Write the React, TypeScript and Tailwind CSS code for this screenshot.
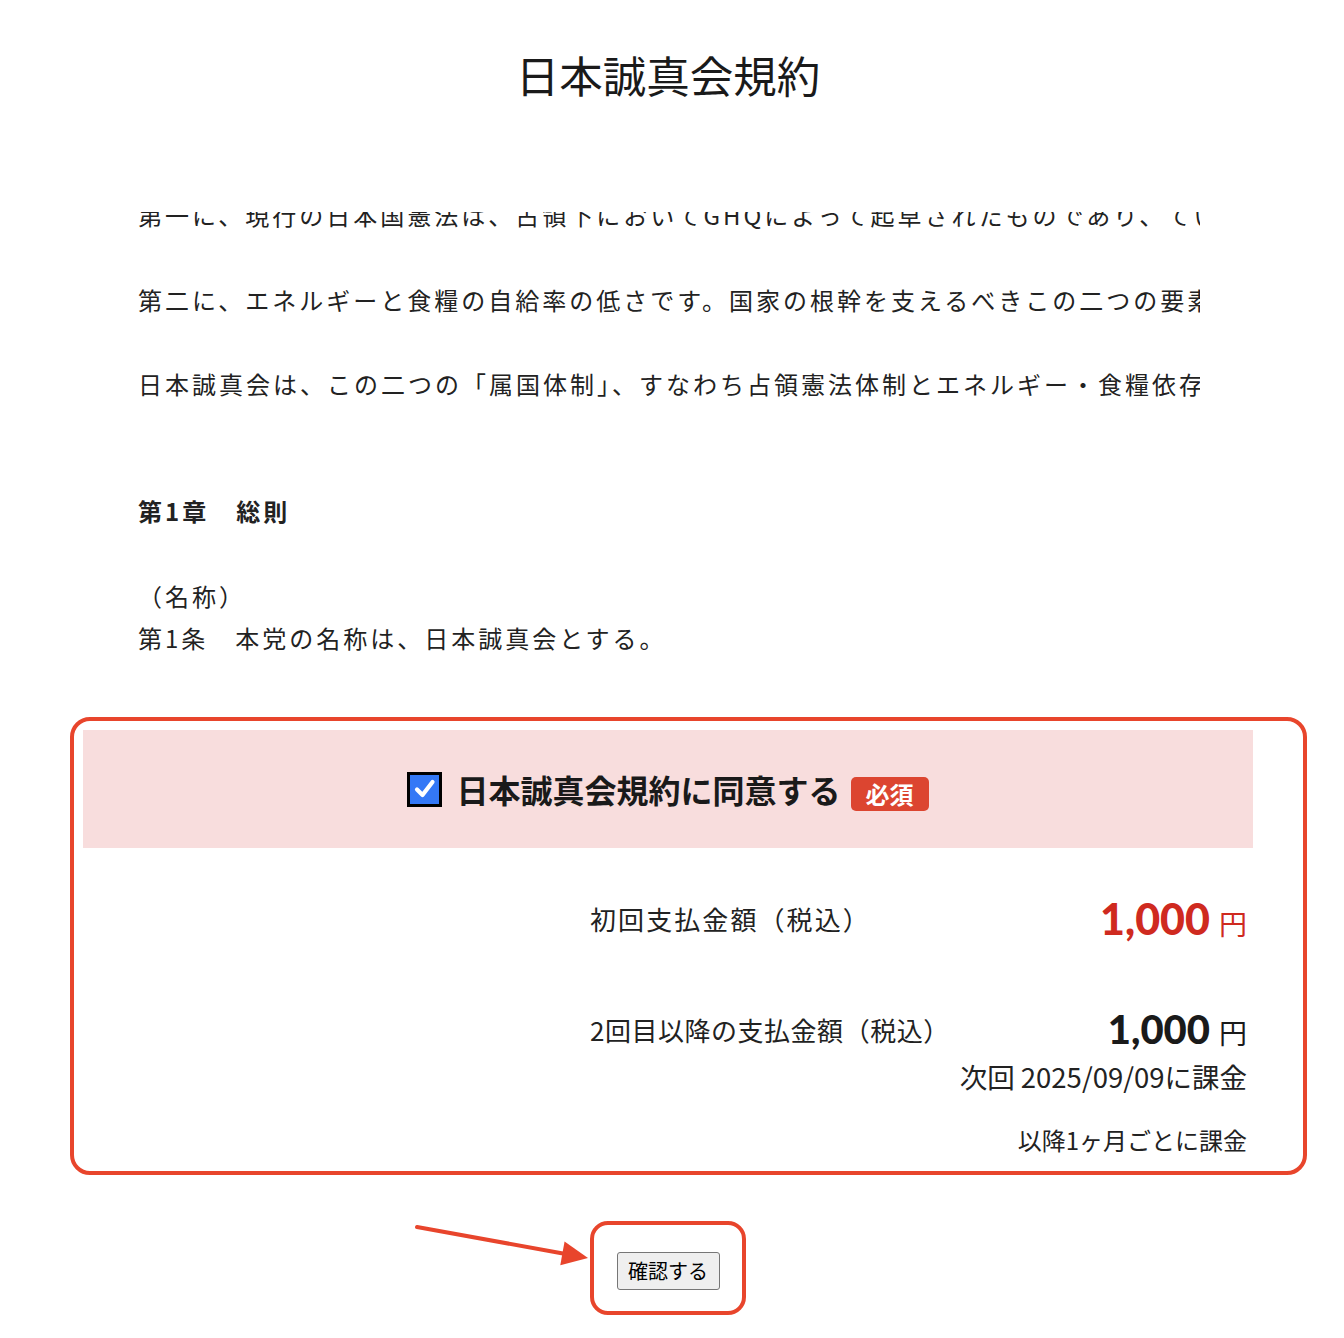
import React from "react";

const jp = { fontFamily: '"Noto Sans CJK JP", "Noto Sans", sans-serif' };
const num = { fontFamily: 'Lato, "Noto Sans CJK JP", sans-serif' };

function Arrow() {
  const sx = 7, sy = 12, tx = 178, ty = 43;
  const dx = tx - sx, dy = ty - sy;
  const len = Math.hypot(dx, dy);
  const ux = dx / len, uy = dy / len;
  const hl = 26, hw = 12;
  const bx = tx - ux * hl, by = ty - uy * hl;
  const px = -uy * hw, py = ux * hw;
  return (
    <svg width="190" height="60" viewBox="0 0 190 60" className="absolute left-[410px] top-[1215px]">
      <line x1={sx} y1={sy} x2={bx + ux * 2} y2={by + uy * 2} stroke="#e8452c" strokeWidth="4" strokeLinecap="round" />
      <polygon points={`${tx},${ty} ${bx + px},${by + py} ${bx - px},${by - py}`} fill="#e8452c" />
    </svg>
  );
}

export default function App() {
  return (
    <div className="relative min-h-[1338px] bg-white text-[#222]" style={jp}>
      <div className="w-[1170px] ml-[83px]">
        <h1 className="pt-[50px] h-[100px] text-[43.5px] leading-[50px] font-normal text-center text-[#1a1a1a]">
          日本誠真会規約
        </h1>

        <div className="mt-[112px] ml-[55px] w-[1062px] h-[447px] overflow-hidden">
          <div className="-mt-[18px] text-[24px] leading-[42.3px] tracking-[3px] whitespace-nowrap text-[#222]">
            <p className="h-[84.6px]">第一に、現行の日本国憲法は、占領下においてGHQによって起草されたものであり、ていまだに一度も改正されていません。</p>
            <p className="h-[84.6px]">第二に、エネルギーと食糧の自給率の低さです。国家の根幹を支えるべきこの二つの要素を海外に依存しています。</p>
            <p className="h-[126.9px]">日本誠真会は、この二つの「属国体制」、すなわち占領憲法体制とエネルギー・食糧依存体制からの脱却を目指します。</p>
            <p className="h-[84.6px] font-bold">第1章　総則</p>
            <p>（名称）</p>
            <p>第1条　本党の名称は、日本誠真会とする。</p>
          </div>
        </div>

        <div className="mt-[71px] h-[118px] bg-[#f8dddd] flex items-center justify-center">
          <div className="w-[35px] h-[35px] border-[3px] border-black bg-[#3478f6] flex items-center justify-center">
            <svg width="24" height="24" viewBox="0 0 24 24">
              <path d="M4 12.5 L9.5 18 L19.5 5" fill="none" stroke="white" strokeWidth="4.2" strokeLinecap="round" strokeLinejoin="round" />
            </svg>
          </div>
          <span className="ml-[14px] text-[32px] font-bold leading-none text-[#1a1a1a]">日本誠真会規約に同意する</span>
          <span className="ml-[10px] mt-[10px] w-[78px] h-[34px] rounded-[5px] bg-[#dc4530] text-white text-[24px] font-bold flex items-center justify-center leading-none">
            必須
          </span>
        </div>

        <div className="pl-[507px] pr-[6px]">
          <div className="mt-[45px] h-[50px] flex items-center justify-between">
            <span className="text-[26px] tracking-[0.08em] text-[#222]">初回支払金額（税込）</span>
            <span className="flex items-baseline text-[#cf2a1f]">
              <span className="text-[43px] font-black leading-none" style={num}>1,000</span>
              <span className="ml-[9px] text-[28px] leading-none">円</span>
            </span>
          </div>
          <div className="mt-[61px] h-[50px] flex items-center justify-between">
            <span className="text-[26px] tracking-[0.02em] text-[#222]">2回目以降の支払金額（税込）</span>
            <span className="flex items-baseline text-[#1a1a1a]">
              <span className="text-[40px] font-black leading-none" style={num}>1,000</span>
              <span className="ml-[9px] text-[28px] leading-none">円</span>
            </span>
          </div>
          <div className="mt-[4px] text-right text-[27.5px] leading-[36px] text-[#222]">次回 2025/09/09に課金</div>
          <div className="mt-[28px] text-right text-[24px] leading-[36px] text-[#222]">以降1ヶ月ごとに課金</div>
        </div>

        <div className="mt-[94px] flex justify-center">
          <button className="w-[103px] h-[38px] bg-[#efefef] border border-[#767676] rounded-[3px] text-[20px] leading-none text-black">
            確認する
          </button>
        </div>
      </div>

      <div className="absolute left-[70px] top-[717px] w-[1237px] h-[458px] border-4 border-[#e8452c] rounded-[20px] pointer-events-none" />
      <div className="absolute left-[590px] top-[1221px] w-[156px] h-[94px] border-4 border-[#e8452c] rounded-[18px] pointer-events-none" />
      <Arrow />
    </div>
  );
}
